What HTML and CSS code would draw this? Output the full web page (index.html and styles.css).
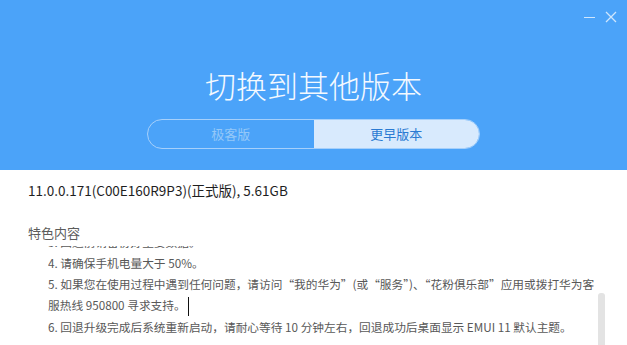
FILE: index.html
```html
<!DOCTYPE html>
<html lang="zh-CN">
<head>
  <meta charset="UTF-8" />
  <title>切换到其他版本</title>
  <link rel="stylesheet" href="styles.css">
</head>
<body>
  <header class="top">
    <div class="win-ctrl">
      <span class="win-min"></span>
      <svg class="win-close" width="12" height="12" viewBox="0 0 12 12">
        <path d="M1 1 L11 11 M11 1 L1 11" stroke="#cfe6fd" stroke-width="1.3" fill="none" />
      </svg>
    </div>
    <h1>切换到其他版本</h1>
    <div class="switch">
      <div class="switch-item">极客版</div>
      <div class="switch-item active">更早版本</div>
    </div>
  </header>

  <main class="body">
    <div class="version">11.0.0.171(C00E160R9P3)(正式版), 5.61GB</div>
    <div class="section-title">特色内容</div>
    <div class="notes">
      <div class="notes-inner">
        <p>3. 回退前请备份好重要数据。</p>
        <p>4. 请确保手机电量大于 50%。</p>
        <p>5. 如果您在使用过程中遇到任何问题，请访问“我的华为”(或“服务”)、“花粉俱乐部”应用或拨打华为客服热线 950800 寻求支持。<span class="caret"></span></p>
        <p>6. 回退升级完成后系统重新启动，请耐心等待 10 分钟左右，回退成功后桌面显示 EMUI 11 默认主题。</p>
      </div>
      <div class="scrollbar"></div>
    </div>
  </main>
</body>
</html>
```

FILE: styles.css
```css
body {
  margin: 0;
  padding: 0;
  width: 627px;
  height: 345px;
  overflow: hidden;
  background: #fff;
  font-family: "Noto Sans CJK SC", "Noto Sans", sans-serif;
}
.top {
  position: relative;
  height: 170px;
  background: #4ba3f9;
  box-sizing: border-box;
  padding-top: 62px;
}
.win-ctrl {
  position: absolute;
  top: 11px;
  right: 10px;
  display: flex;
  align-items: center;
  gap: 10px;
}
.win-min {
  display: block;
  width: 11px;
  height: 1px;
  background: #cfe6fd;
}
.win-close {
  display: block;
}
h1 {
  margin: 0;
  text-align: center;
  color: #f4f9ff;
  font-size: 31px;
  font-weight: 300;
  line-height: 46px;
}
.switch {
  display: flex;
  width: 333px;
  height: 30px;
  margin: 11px auto 0;
  box-sizing: border-box;
  border: 1px solid #a6d0fb;
  border-radius: 15px;
  overflow: hidden;
}
.switch-item {
  flex: 1;
  text-align: center;
  line-height: 28px;
  font-size: 13px;
  color: #94c8f8;
}
.switch-item.active {
  background: #d8eafd;
  color: #2a7ad2;
  border-radius: 0 14px 14px 0;
}
.body {
  padding: 0 0 0 28px;
}
.version {
  margin-top: 10px;
  font-size: 13.5px;
  line-height: 20px;
  color: #1e1e1e;
}
.section-title {
  margin-top: 23px;
  font-size: 13px;
  line-height: 20px;
  color: #5c5c5c;
}
.notes {
  position: relative;
  height: 100px;
  overflow: hidden;
  margin: 3px 0 0 20px;
}
.notes-inner {
  margin-top: -15px;
  width: 552px;
}
.notes p {
  margin: 0;
  font-size: 11.7px;
  line-height: 21px;
  color: #585858;
}
.caret {
  display: inline-block;
  width: 1px;
  height: 19px;
  margin-left: 2px;
  background: #111;
  vertical-align: middle;
}
.scrollbar {
  position: absolute;
  top: 47px;
  right: 22px;
  width: 7px;
  height: 80px;
  background: #e3e3e3;
  border-radius: 3px;
}
```
